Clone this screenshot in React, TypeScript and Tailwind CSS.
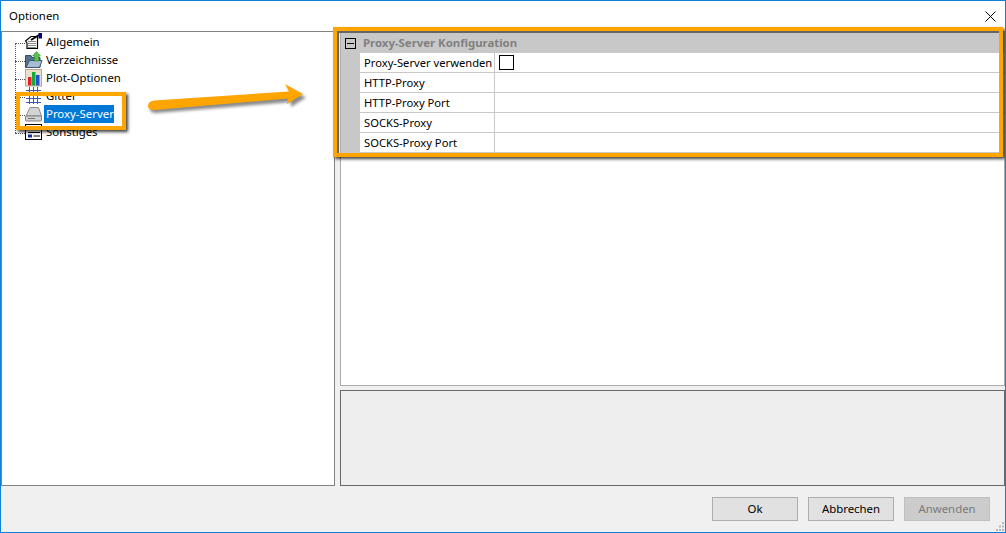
import React from "react";

const rowsTree = ["Allgemein", "Verzeichnisse", "Plot-Optionen", "Gitter", "Proxy-Server", "Sonstiges"];
const props = ["Proxy-Server verwenden", "HTTP-Proxy", "HTTP-Proxy Port", "SOCKS-Proxy", "SOCKS-Proxy Port"];

function TreeIcon({ i }: { i: number }) {
  if (i === 0)
    return (
      <svg width="18" height="18" viewBox="0 0 18 18">
        <path d="M0.500 8 L6 3.500 H12.500 V15.500 H2 V10 Z" fill="#fff" stroke="#000" strokeWidth="1.200" />
        <path d="M3.500 8.500h7M3.500 10.500h7M3.500 12.500h7M3.500 14.500h7" stroke="#111" strokeDasharray="1 1" />
        <path d="M6 7 L14 2" stroke="#000" strokeWidth="1.800" />
        <rect x="13.500" y="0" width="3.500" height="5.500" fill="#00007f" />
      </svg>
    );
  if (i === 1)
    return (
      <svg width="18" height="18" viewBox="0 0 18 18">
        <path d="M0.500 4.500 H6 L7 6.500 H15 V16.500 H0.500 Z" fill="#55708f" stroke="#2f4f6f" />
        <path d="M1 16.500 L4.500 9.500 H17 L14.500 16.500 Z" fill="#a9bdd2" stroke="#3b5878" />
        <path d="M11.500 0.500 L15.500 5 H13.800 V10 H9.500 V5 H7.500 Z" fill="#5cc24f" stroke="#2c8a2c" strokeWidth="0.600" />
      </svg>
    );
  if (i === 2)
    return (
      <svg width="18" height="18" viewBox="0 0 18 18">
        <rect x="0.500" y="0.500" width="16" height="16.500" fill="#eadfcd" stroke="#b9a78c" />
        <rect x="3" y="8" width="3.500" height="8.500" fill="#e0202a" />
        <rect x="7" y="3" width="3.500" height="13.500" fill="#18a838" />
        <rect x="11" y="6" width="3.500" height="10.500" fill="#2050d8" />
      </svg>
    );
  if (i === 3)
    return (
      <svg width="18" height="18" viewBox="0 0 18 18">
        <path d="M4.500 0V17M8.500 0V17M12.500 0V17M1 3.500H16M1 7.500H16M1 11.500H16M1 15.500H16" stroke="#3f5aa8" />
      </svg>
    );
  if (i === 4)
    return (
      <svg width="18" height="18" viewBox="0 0 18 18">
        <path d="M5 2.500 H13.500 L16.500 11 H1 Z" fill="#d4d4d4" stroke="#8d8d8d" />
        <rect x="0.500" y="11" width="16" height="5" rx="1" fill="#d0d0d0" stroke="#808080" />
        <path d="M3 13.500H10" stroke="#7a7a7a" />
      </svg>
    );
  return (
    <svg width="18" height="18" viewBox="0 0 18 18">
      <rect x="0.500" y="1.500" width="16" height="15" fill="#fff" stroke="#000" />
      <rect x="3" y="4" width="4" height="3" fill="#1a2f9a" />
      <path d="M8.500 5.500H15M3 9.500H15" stroke="#000" />
      <rect x="3" y="11.500" width="4" height="3" fill="#1a2f9a" />
      <path d="M8.500 13H15" stroke="#000" />
    </svg>
  );
}

export default function App() {
  return (
    <div
      className="relative w-[1006px] h-[533px] overflow-hidden flex flex-col border border-[#0f7fd8] bg-[#f0f0f0] text-[11.2px] text-black"
      style={{ fontFamily: '"Noto Sans", "Open Sans", sans-serif' }}
    >
      <div className="h-[30px] bg-white flex items-center justify-between pl-[8px] pr-[9px] shrink-0">
        <span className="text-[11.4px]">Optionen</span>
        <svg width="11" height="11" viewBox="0 0 11 11">
          <path d="M0.500 0.500L10.500 10.500M10.500 0.500L0.500 10.500" stroke="#000" strokeWidth="1" />
        </svg>
      </div>

      <div className="flex h-[455px] shrink-0">
        <div className="relative w-[334px] bg-white border border-[#828282] pt-[1px] pl-[13px]">
          <div className="absolute left-[13px] top-[11px] h-[90px] border-l border-dotted border-[#555]" />
          {rowsTree.map((t, i) => (
            <div key={t} className="h-[18px] flex items-center">
              <div className="w-[10px] mt-[2px] border-t border-dotted border-[#555] shrink-0" />
              <div className="w-[18px] h-[18px] shrink-0">
                <TreeIcon i={i} />
              </div>
              <span
                className={
                  i === 4
                    ? "ml-[1px] h-[18px] leading-[17px] pl-[2px] w-[70px] bg-[#0078d7] text-white whitespace-nowrap text-[11.4px]"
                    : "ml-[1px] h-[18px] pl-[2px] leading-[17px] whitespace-nowrap text-[11.4px]"
                }
              >
                {t}
              </span>
            </div>
          ))}
        </div>

        <div className="ml-[5px] w-[665px] flex flex-col">
          <div className="h-[355px] bg-white border border-t-0 border-[#ababab]">
            <div className="h-[22px] pt-[2px] bg-[#c8c8c8] flex items-center">
              <div className="ml-[4px] w-[11px] h-[11px] border border-black flex items-center justify-center shrink-0">
                <div className="w-[7px] h-px bg-black" />
              </div>
              <span className="ml-[7px] font-bold text-[#808080] text-[11.4px]">Proxy-Server Konfiguration</span>
            </div>
            {props.map((p, i) => (
              <div key={p} className="h-[20px] flex bg-[#c8c8c8]">
                <div className="ml-[19px] flex-1 flex bg-white border-b border-[#c8c8c8]">
                  <div className="w-[135px] pl-[4px] leading-[19px] border-r border-[#c8c8c8] shrink-0 whitespace-nowrap">
                    {p}
                  </div>
                  <div className="flex-1 flex items-center pl-[4px]">
                    {i === 0 && <div className="w-[15px] h-[15px] border border-black bg-white" />}
                  </div>
                </div>
              </div>
            ))}
          </div>
          <div className="mt-[4px] h-[96px] bg-[#eeeeee] border border-[#696969]" />
        </div>
      </div>

      <div className="flex-1 flex justify-end items-start gap-[10px] pt-[11px] pr-[15px]">
        <button className="w-[86px] h-[24px] bg-[#e1e1e1] border border-[#adadad] text-[11.4px]">Ok</button>
        <button className="w-[86px] h-[24px] bg-[#e1e1e1] border border-[#adadad] text-[11.4px]">Abbrechen</button>
        <button className="w-[86px] h-[24px] bg-[#cccccc] border border-[#bfbfbf] text-[11.4px] text-[#7a7a7a]">Anwenden</button>
      </div>

      <svg className="absolute right-0 bottom-0" width="11" height="11" viewBox="0 0 11 11">
        <path d="M8 1h2v2H8zM5 4.500h2v2H5zM8 4.500h2v2H8zM2 8h2v2H2zM5 8h2v2H5zM8 8h2v2H8z" fill="#b8b8b8" />
      </svg>

      {/* Annotations lying over the dialog */}
      <div className="absolute left-[15px] top-[91px] w-[110px] h-[38px] border-[4px] border-[#ffa500] shadow-[2px_2px_3px_rgba(0,0,0,0.75)]" />
      <div className="absolute left-[332px] top-[26px] w-[670px] h-[130px] border-[4px] border-[#ffa500] shadow-[2px_2px_3px_rgba(0,0,0,0.75)]">
        <div className="h-full w-full border-l-2 border-t-2 border-[#666]" />
      </div>
      <svg className="absolute left-[140px] top-[75px]" width="175" height="50" viewBox="0 0 175 50">
        <path
          d="M13 34 C9 34 7 32 7 30 C7 27 9 25 13 24.500 L148 15.500 L145 9 L163 18.500 L148 28 L148 23 Z"
          fill="#2a2a2a"
          opacity="0.55"
          transform="translate(2 3)"
          style={{ filter: "blur(1.5px)" }}
        />
        <path
          d="M13 34 C9 34 7 32 7 30 C7 27 9 25 13 24.500 L148 15.500 L144 8 L162 18 L146 28 L147 22.500 Z"
          fill="#ffa500"
        />
      </svg>
    </div>
  );
}
